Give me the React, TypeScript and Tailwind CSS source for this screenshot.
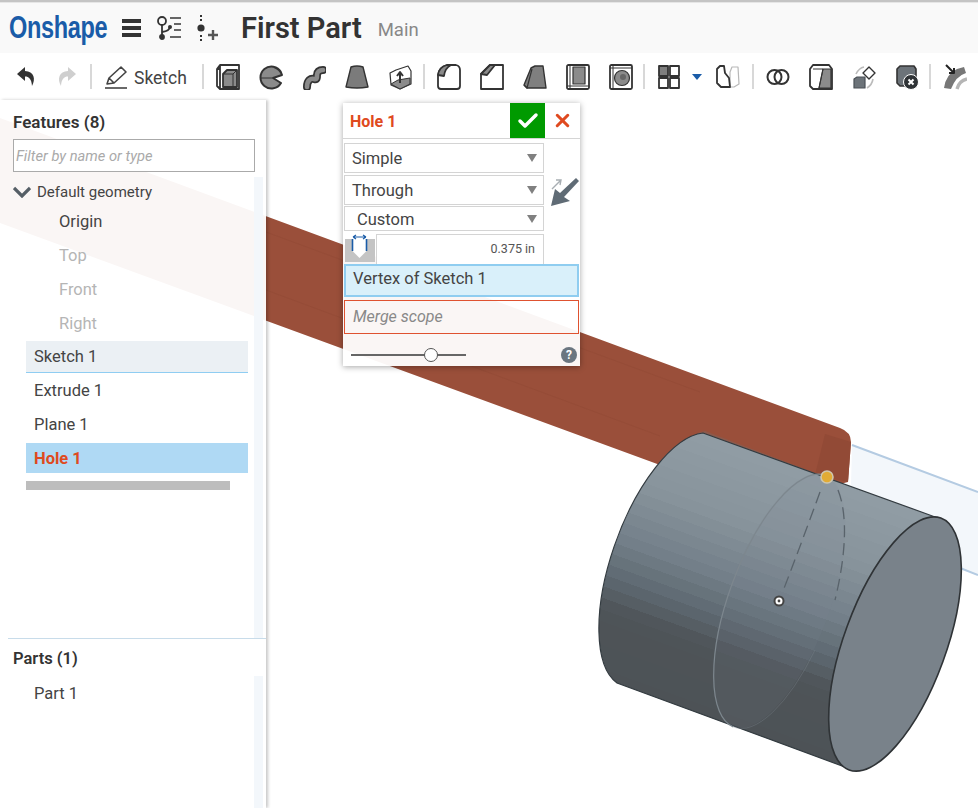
import { Check, X } from "lucide-react";

const ink = "#333";
const gray = "#8b8b8b";

// banded shading of the cylinder: the viewer draws it in facets
const anchors: [number, number[]][] = [
  [0, [144, 156, 164]],
  [0.25, [135, 147, 155]],
  [0.45, [116, 128, 138]],
  [0.6, [95, 106, 114]],
  [0.72, [78, 84, 88]],
  [1, [77, 82, 86]],
];

function shade(t: number) {
  const i = anchors.findIndex((a) => a[0] >= t);
  if (i <= 0) return `rgb(${anchors[0][1].join(",")})`;
  const [t0, c0] = anchors[i - 1];
  const [t1, c1] = anchors[i];
  const k = (t - t0) / (t1 - t0);
  return `rgb(${c0.map((v, n) => Math.round(v + (c1[n] - v) * k)).join(",")})`;
}

const bandCount = 24;
const bands = Array.from({ length: bandCount }, (_, i) => i);

function Tool({ children, w = 24 }: { children: React.ReactNode; w?: number }) {
  return (
    <svg width={w} height="26" viewBox={`0 0 ${w} 26`} fill="none" stroke={ink} strokeWidth="1.8" strokeLinejoin="round" className="shrink-0">
      {children}
    </svg>
  );
}

function Divider() {
  return <div className="w-[2px] h-[25px] bg-[#d8d8d8] shrink-0" />;
}

function SelectBox({ label, className, indent }: { label: string; className: string; indent?: boolean }) {
  return (
    <div className={`flex items-center justify-between w-[200px] border border-[#d4d4d4] bg-white pr-[6px] ${indent ? "pl-[12px]" : "pl-[7px]"} ${className}`}>
      <span className="text-[16.5px] text-[#444] pt-[3px]">{label}</span>
      <span className="w-0 h-0 border-x-[5px] border-x-transparent border-t-[8px] border-t-[#808080]" />
    </div>
  );
}

export default function App() {
  return (
    <div className="relative w-[978px] h-[808px] overflow-hidden bg-white font-['Roboto',sans-serif] text-[#444]">
      {/* model viewport */}
      <svg className="absolute inset-0" width="978" height="808" viewBox="0 0 978 808" fill="none">
        <defs>
          <linearGradient id="body" gradientUnits="userSpaceOnUse" x1="703" y1="433" x2="612" y2="684">
            {bands.flatMap((i) => [
              <stop key={`a${i}`} offset={i / bandCount} stopColor={shade(i / bandCount)} />,
              <stop key={`b${i}`} offset={(i + 1) / bandCount} stopColor={shade(i / bandCount)} />,
            ])}
          </linearGradient>
        </defs>
        <path d="M852 445 L978 492 V575 L850 527 Z" fill="#f3f7fb" />
        <path d="M852 445 L978 492 M955 566 L978 575" stroke="#b4cbe2" strokeWidth="2" />
        <path d="M0 118 L840 428 Q851 432 851 442 L848 482 L700 520 L660 465 L0 223 Z" fill="#9a4f3a" />
        <path d="M266 232 L700 392 M266 290 L660 436" stroke="#8a4633" strokeWidth="1" opacity="0.3" />
        <path d="M825 434 L851 442 L848 482 L815 475 Z" fill="#924a36" />
        <path d="M697 433 L705 431 L818 474 L808 478 Z" fill="#8c5a4c" />
        <path d="M703 433 L938 518 L853 770 L617 683 A56 134 20 0 1 703 433 Z" fill="url(#body)" stroke="#333b40" strokeWidth="1.2" />
        <ellipse cx="779" cy="601" rx="51" ry="134" transform="rotate(20 779 601)" fill="#7c8791" fillOpacity="0.13" />
        <path d="M824.8 475.1 A51 134 20 0 0 733.2 726.9" stroke="#7d878e" strokeWidth="1.2" />
        <path d="M733.2 726.9 A51 134 20 0 0 815 650" stroke="#7d878e" strokeWidth="1" opacity="0.35" />
        <ellipse cx="895" cy="644" rx="51" ry="134" transform="rotate(20 895 644)" fill="#79828a" stroke="#2f3336" strokeWidth="1.6" />
        <path d="M820 492 C 808 525 795 560 783 591 M838 490 C 848 515 846 555 835 600" stroke="#59636b" strokeWidth="1.3" strokeDasharray="12 6" />
        <circle cx="827" cy="477" r="6" fill="#e2ab35" stroke="#cfc6ae" strokeWidth="1.6" />
        <circle cx="779" cy="601" r="4.5" fill="#fff" stroke="#444" strokeWidth="2" />
        <circle cx="779" cy="601" r="1.4" fill="#444" />
      </svg>

      <div className="absolute left-0 right-0 top-0 z-10">
        <div className="h-[3px] bg-[#c4c4c4] border-b border-[#e6e6e6]" />
        {/* header */}
        <div className="h-[50px] bg-[#f9f9f9] flex items-center pl-[9px]">
          <div className="w-[113px] shrink-0">
            <span className="inline-block origin-left scale-x-[0.76] text-[31px] font-bold text-[#1a5ca8] tracking-[-0.5px] font-['Liberation_Sans',sans-serif]">Onshape</span>
          </div>
          <div className="flex flex-col gap-[3px] w-[19px]">
            <div className="h-[4px] bg-[#333]" />
            <div className="h-[4px] bg-[#333]" />
            <div className="h-[4px] bg-[#333]" />
          </div>
          <svg className="ml-[15px]" width="26" height="26" viewBox="0 0 26 26" fill="none" stroke="#333" strokeWidth="1.8">
            <circle cx="6" cy="6" r="4" />
            <path d="M6 10 V21" />
            <circle cx="6" cy="22" r="2" fill="#333" />
            <path d="M6 17 Q14 16 14 11" />
            <circle cx="14" cy="12" r="2" fill="#333" stroke="none" />
            <path d="M14 3 H25 M18 9 H25 M18 15 H25 M14 22 H25" stroke="#666" />
          </svg>
          <svg className="ml-[15px]" width="24" height="28" viewBox="0 0 24 28" fill="none" stroke="#333">
            <path d="M4 1 V7 M4 21 V27" strokeWidth="2" strokeDasharray="2 2" />
            <circle cx="4" cy="14" r="3.6" fill="#333" stroke="none" />
            <path d="M11 21 H21 M16 16 V26" strokeWidth="2.4" stroke="#555" />
          </svg>
          <span className="ml-[20px] text-[29px] font-semibold text-[#333] leading-none">First Part</span>
          <span className="ml-[16px] text-[18.5px] text-[#888] mt-[6px]">Main</span>
        </div>
        {/* toolbar */}
        <div className="h-[47px] bg-white flex items-center pl-[16px]">
          <svg width="20" height="21" viewBox="0 0 20 21" fill="#333">
            <path d="M9 1 L1 8 L9 15 V10.5 C 13 10.5 15.5 13 16 20 C 20 13 18 5.5 9 5 Z" />
          </svg>
          <svg className="ml-[21px]" width="20" height="21" viewBox="0 0 20 21" fill="#cfcfcf">
            <path d="M11 1 L19 8 L11 15 V10.5 C 7 10.5 4.5 13 4 20 C 0 13 2 5.5 11 5 Z" />
          </svg>
          <div className="ml-[13px]"><Divider /></div>
          <svg className="ml-[12px]" width="24" height="26" viewBox="0 0 24 26" fill="none" stroke="#444" strokeWidth="1.6" strokeLinejoin="round">
            <path d="M3 20 L5 14 L17 3 L22 8 L10 19 Z M5 14 L10 19" />
            <path d="M1 24 H23" />
          </svg>
          <span className="ml-[6px] pt-[3px] text-[17.5px] text-[#444]">Sketch</span>
          <div className="ml-[15px]"><Divider /></div>
          <div className="ml-[12px] flex items-center gap-[19px]">
            <Tool>
              <path d="M1 5 L4 1 H23 V25 H4 L1 22 Z M4 1 V5 M1 5 H4 V25" />
              <path d="M7 10 L11 6 H21 V23 H7 Z" fill={gray} />
              <path d="M7 10 H17 V23 M17 10 L21 6" strokeWidth="1" />
            </Tool>
            <Tool>
              <path d="M22 8 A11 11 0 1 0 22 19 L14 14 L23 11 Q21 5 15 3" fill={gray} strokeWidth="2" />
              <path d="M2 14 H13" strokeWidth="1" />
            </Tool>
            <Tool>
              <path d="M5 23 C 5 16 9 14 12 15 C 15 16 15 14 15 11 C 15 8 17 6 21 6" stroke={ink} strokeWidth="8" strokeLinecap="round" />
              <path d="M5 23 C 5 16 9 14 12 15 C 15 16 15 14 15 11 C 15 8 17 6 21 6" stroke={gray} strokeWidth="4.6" strokeLinecap="round" />
            </Tool>
            <Tool>
              <path d="M6 3 Q12 1 18 3 L23 23 Q12 25 1 23 Z" fill="#7b7b7b" strokeWidth="1.4" />
            </Tool>
            <Tool>
              <path d="M2 9 L8 6 L20 2 L23 7 V20 L12 25 L3 21 Z" fill="#fff" strokeWidth="1.2" />
              <path d="M3 20 L10 16 L22 14 V20 L12 25 Z" fill={gray} strokeWidth="1" />
              <path d="M12 8 V19 M9 12 L12 8 L15 12" strokeWidth="2" />
            </Tool>
          </div>
          <div className="ml-[11px]"><Divider /></div>
          <div className="ml-[12px] flex items-center gap-[19px]">
            <Tool>
              <path d="M1 11 Q2 3 10 1 H19 Q23 2 23 6 V22 Q23 25 20 25 H4 Q1 25 1 22 Z" />
              <path d="M1 11 Q2 3 10 1 H14 Q8 4 7 12 Z" fill={gray} />
            </Tool>
            <Tool>
              <path d="M1 10 L10 1 H23 V25 H1 Z" />
              <path d="M1 10 L10 1 H15 L7 11 Z" fill={gray} />
            </Tool>
            <Tool>
              <path d="M1 21 L8 4 L12 2 H20 L23 24 H4 Z" fill="#7f7f7f" strokeWidth="1.4" />
              <path d="M1 21 L4 24 L9 5" strokeWidth="1.2" />
            </Tool>
            <Tool>
              <rect x="1" y="1" width="22" height="24" rx="1.5" />
              <path d="M4 1 V25 M1 22 H23" strokeWidth="1" />
              <rect x="7" y="3" width="12" height="17" fill={gray} strokeWidth="1.2" />
            </Tool>
            <Tool>
              <rect x="1" y="1" width="22" height="24" rx="1.5" />
              <path d="M1 4 H23 M4 1 V25" strokeWidth="1" />
              <circle cx="13" cy="14" r="7.5" fill={gray} strokeWidth="1.2" />
              <circle cx="14" cy="13" r="3" fill="#666" stroke="none" />
            </Tool>
          </div>
          <div className="ml-[10px]"><Divider /></div>
          <div className="ml-[12px] flex items-center">
            <Tool>
              <rect x="2" y="2" width="9" height="10" fill="#7f7f7f" />
              <rect x="13" y="2" width="9" height="10" />
              <rect x="2" y="14" width="9" height="10" />
              <rect x="13" y="14" width="9" height="10" />
            </Tool>
            <span className="ml-[11px] w-0 h-0 border-x-[5px] border-x-transparent border-t-[6px] border-t-[#1a5ca8]" />
            <svg className="ml-[14px]" width="24" height="26" viewBox="0 0 24 26" fill="none" strokeLinejoin="round">
              <path d="M14 8 L16 3 H22 L23 20 L18 23 H14 Z" stroke="#b8b8b8" strokeWidth="1.2" />
              <path d="M1 5 L4 2 H8 L9 9 L13 14 L14 23 H5 L1 19 Z" fill="#fff" stroke={ink} strokeWidth="1.8" />
            </svg>
          </div>
          <div className="ml-[12px]"><Divider /></div>
          <div className="ml-[12px] flex items-center gap-[19px]">
            <Tool>
              <circle cx="8.5" cy="13" r="7" strokeWidth="2" />
              <circle cx="15.5" cy="13" r="7" strokeWidth="2" />
            </Tool>
            <Tool>
              <path d="M1 5 L4 1 H20 L23 5 V25 H4 L1 22 Z" />
              <path d="M14 5 H22 V24 H10 Z" fill={gray} strokeWidth="1.2" />
              <path d="M4 5 H14 L10 24" strokeWidth="1" />
            </Tool>
            <Tool>
              <path d="M2 15 L5 13 H13 V24 H2 Z" fill="#6c7379" stroke="#4a5056" strokeWidth="1.2" />
              <path d="M17 3 L23 9 L17 15 L11 9 Z" strokeWidth="1.4" />
              <path d="M4 10 Q7 4 12 3 M21 15 Q20 21 15 24" stroke="#bbb" strokeWidth="1.6" />
            </Tool>
            <Tool>
              <path d="M2 5 L5 2 H19 L21 5 V22 H5 L2 19 Z" fill="#6c7379" stroke="#333" strokeWidth="1.6" />
              <circle cx="16" cy="18" r="7.5" fill="#2f3336" stroke="#fff" strokeWidth="1" />
              <path d="M13.5 15.5 L18.5 20.5 M18.5 15.5 L13.5 20.5" stroke="#fff" strokeWidth="2" />
            </Tool>
          </div>
          <div className="ml-[10px]"><Divider /></div>
          <div className="ml-[12px]">
            <Tool>
              <path d="M1 24 Q3 10 14 5 L21 3 L23 9 Q13 12 8 25 Z" fill="#777" stroke="none" />
              <path d="M14 25 Q16 17 24 15" stroke="#b5b5b5" strokeWidth="3.4" />
              <path d="M3 1 L11 9 M11 4 V9 H6" stroke="#222" strokeWidth="2" />
            </Tool>
          </div>
        </div>
      </div>

      <div className="absolute left-0 top-[100px] bottom-0 z-10 w-[266px] bg-white/95 shadow-[2px_0_3px_rgba(0,0,0,0.22)] flex flex-col">
        {/* features */}
        <div className="h-[538px] flex flex-col relative">
          <div className="pl-[13px] pt-[11px] text-[17px] font-semibold text-[#333] leading-[22px]">Features (8)</div>
          <div className="ml-[13px] mt-[6px] w-[242px] h-[33px] border border-[#aaa] bg-white flex items-center pl-[2px] pt-[1px] text-[14.7px] italic text-[#aaa]">Filter by name or type</div>
          <div className="flex">
            <div className="w-[254px]">
              <div className="flex items-center h-[38px] pl-[13px] pt-[2px]">
                <svg width="18" height="12" viewBox="0 0 18 12" fill="none" stroke="#555e66" strokeWidth="3.2">
                  <path d="M1 2 L9 10 L17 2" />
                </svg>
                <span className="ml-[6px] text-[15px] text-[#444]">Default geometry</span>
              </div>
              <div className="pl-[59px] text-[16.5px]">
                <div className="h-[34px] -mt-[5px] flex items-center text-[#444]">Origin</div>
                <div className="h-[34px] flex items-center text-[#b5b5b5]">Top</div>
                <div className="h-[34px] flex items-center text-[#b5b5b5]">Front</div>
                <div className="h-[34px] flex items-center text-[#b5b5b5]">Right</div>
              </div>
              <div className="ml-[26px] w-[222px] text-[16.5px]">
                <div className="h-[32px] flex items-center pl-[8px] pt-[2px] bg-[#ebf0f4] border-b border-[#8fcdf2]">Sketch 1</div>
                <div className="h-[34px] flex items-center pl-[8px] pt-[2px]">Extrude 1</div>
                <div className="h-[34px] flex items-center pl-[8px] pt-[2px]">Plane 1</div>
                <div className="h-[30px] mt-[2px] flex items-center pl-[8px] pt-[2px] bg-[#afd9f4] font-bold text-[#df4a20]">Hole 1</div>
                <div className="mt-[8px] w-[204px] h-[9px] bg-[#bdbdbd]" />
              </div>
            </div>
            <div className="w-[9px] bg-[#f3f7fb] h-[461px] mt-[5px]" />
          </div>
        </div>
        <div className="ml-[8px] h-[1px] bg-[#c8dcea]" />
        {/* parts */}
        <div className="pl-[13px] pt-[9px] text-[16.5px] font-semibold text-[#333] leading-[22px]">Parts (1)</div>
        <div className="flex flex-1 mt-[6px]">
          <div className="w-[254px] pl-[34px] text-[16.5px] pt-[6px]">Part 1</div>
          <div className="w-[9px] bg-[#f3f7fb]" />
        </div>
      </div>

      {/* hole dialog */}
      <div className="absolute left-[343px] top-[103px] z-20 w-[237px] h-[263px] bg-white/95 shadow-[0_1px_6px_rgba(0,0,0,0.35)]">
        <div className="h-[36px] flex items-center border-b border-[#d5d5d5]">
          <span className="ml-[7px] pt-[3px] text-[16px] font-bold text-[#df4a20] w-[160px]">Hole 1</span>
          <div className="w-[35px] h-[35px] bg-[#009a00] flex items-center justify-center">
            <Check size={24} strokeWidth={3.5} color="#fff" />
          </div>
          <X size={21} strokeWidth={3.5} color="#df4a20" className="ml-[7px]" />
        </div>
        <div className="relative pl-[1px]">
          <SelectBox label="Simple" className="h-[30px] mt-[4px]" />
          <SelectBox label="Through" className="h-[30px] mt-[2px]" />
          <SelectBox label="Custom" indent className="h-[25px] mt-[1px]" />
          <svg className="absolute left-[206px] top-[33px]" width="31" height="32" viewBox="0 0 31 32" fill="none">
            <path d="M2 30 L6 13 L11 17 L27 2 L30 5 L15 21 L21 25 Z" fill="#5f6b75" />
            <path d="M3 13 L11 5 M7 4 L12 4 L11 9" stroke="#a8aeb3" strokeWidth="1.4" />
          </svg>
          <div className="flex h-[30px] mt-[3px]">
            <svg width="32" height="30" viewBox="0 0 32 30" fill="none" className="shrink-0">
              <rect x="1" y="5" width="30" height="23" fill="#c4c4c4" />
              <path d="M8.5 5 V17 L15.5 24 L22.5 17 V5 Z" fill="#fff" />
              <path d="M8.5 5 V17 M22.5 5 V17" stroke="#1a5ca8" strokeWidth="1.6" />
              <path d="M9 3 H22 M9 3 L12 1 M9 3 L12 5 M22 3 L19 1 M22 3 L19 5" stroke="#1a5ca8" strokeWidth="1.2" />
            </svg>
            <div className="w-[168px] border border-b-0 border-[#d4d4d4] bg-white flex items-center justify-end pr-[8px] text-[12.5px] text-[#555]">0.375 in</div>
          </div>
        </div>
        <div className="ml-[1px] w-[235px] h-[33px] border-2 border-[#8fcdf0] bg-[#d9f0fa] flex items-center pl-[7px] text-[16.5px] text-[#444] leading-none pb-[2px]">Vertex of Sketch 1</div>
        <div className="ml-[1px] mt-[3px] w-[235px] h-[34px] border border-[#df5230] flex items-center pl-[8px] text-[16px] italic text-[#888]">Merge scope</div>
        <div className="flex items-center h-[32px] pl-[8px] pt-[10px]">
          <div className="relative w-[115px] h-[2px] bg-[#666]">
            <div className="absolute left-[73px] -top-[6px] w-[14px] h-[14px] rounded-full bg-white border border-[#555]" />
          </div>
          <div className="ml-[95px] w-[16px] h-[16px] rounded-full bg-[#6b7680] flex items-center justify-center text-[12px] font-bold text-white leading-none">?</div>
        </div>
      </div>
    </div>
  );
}
